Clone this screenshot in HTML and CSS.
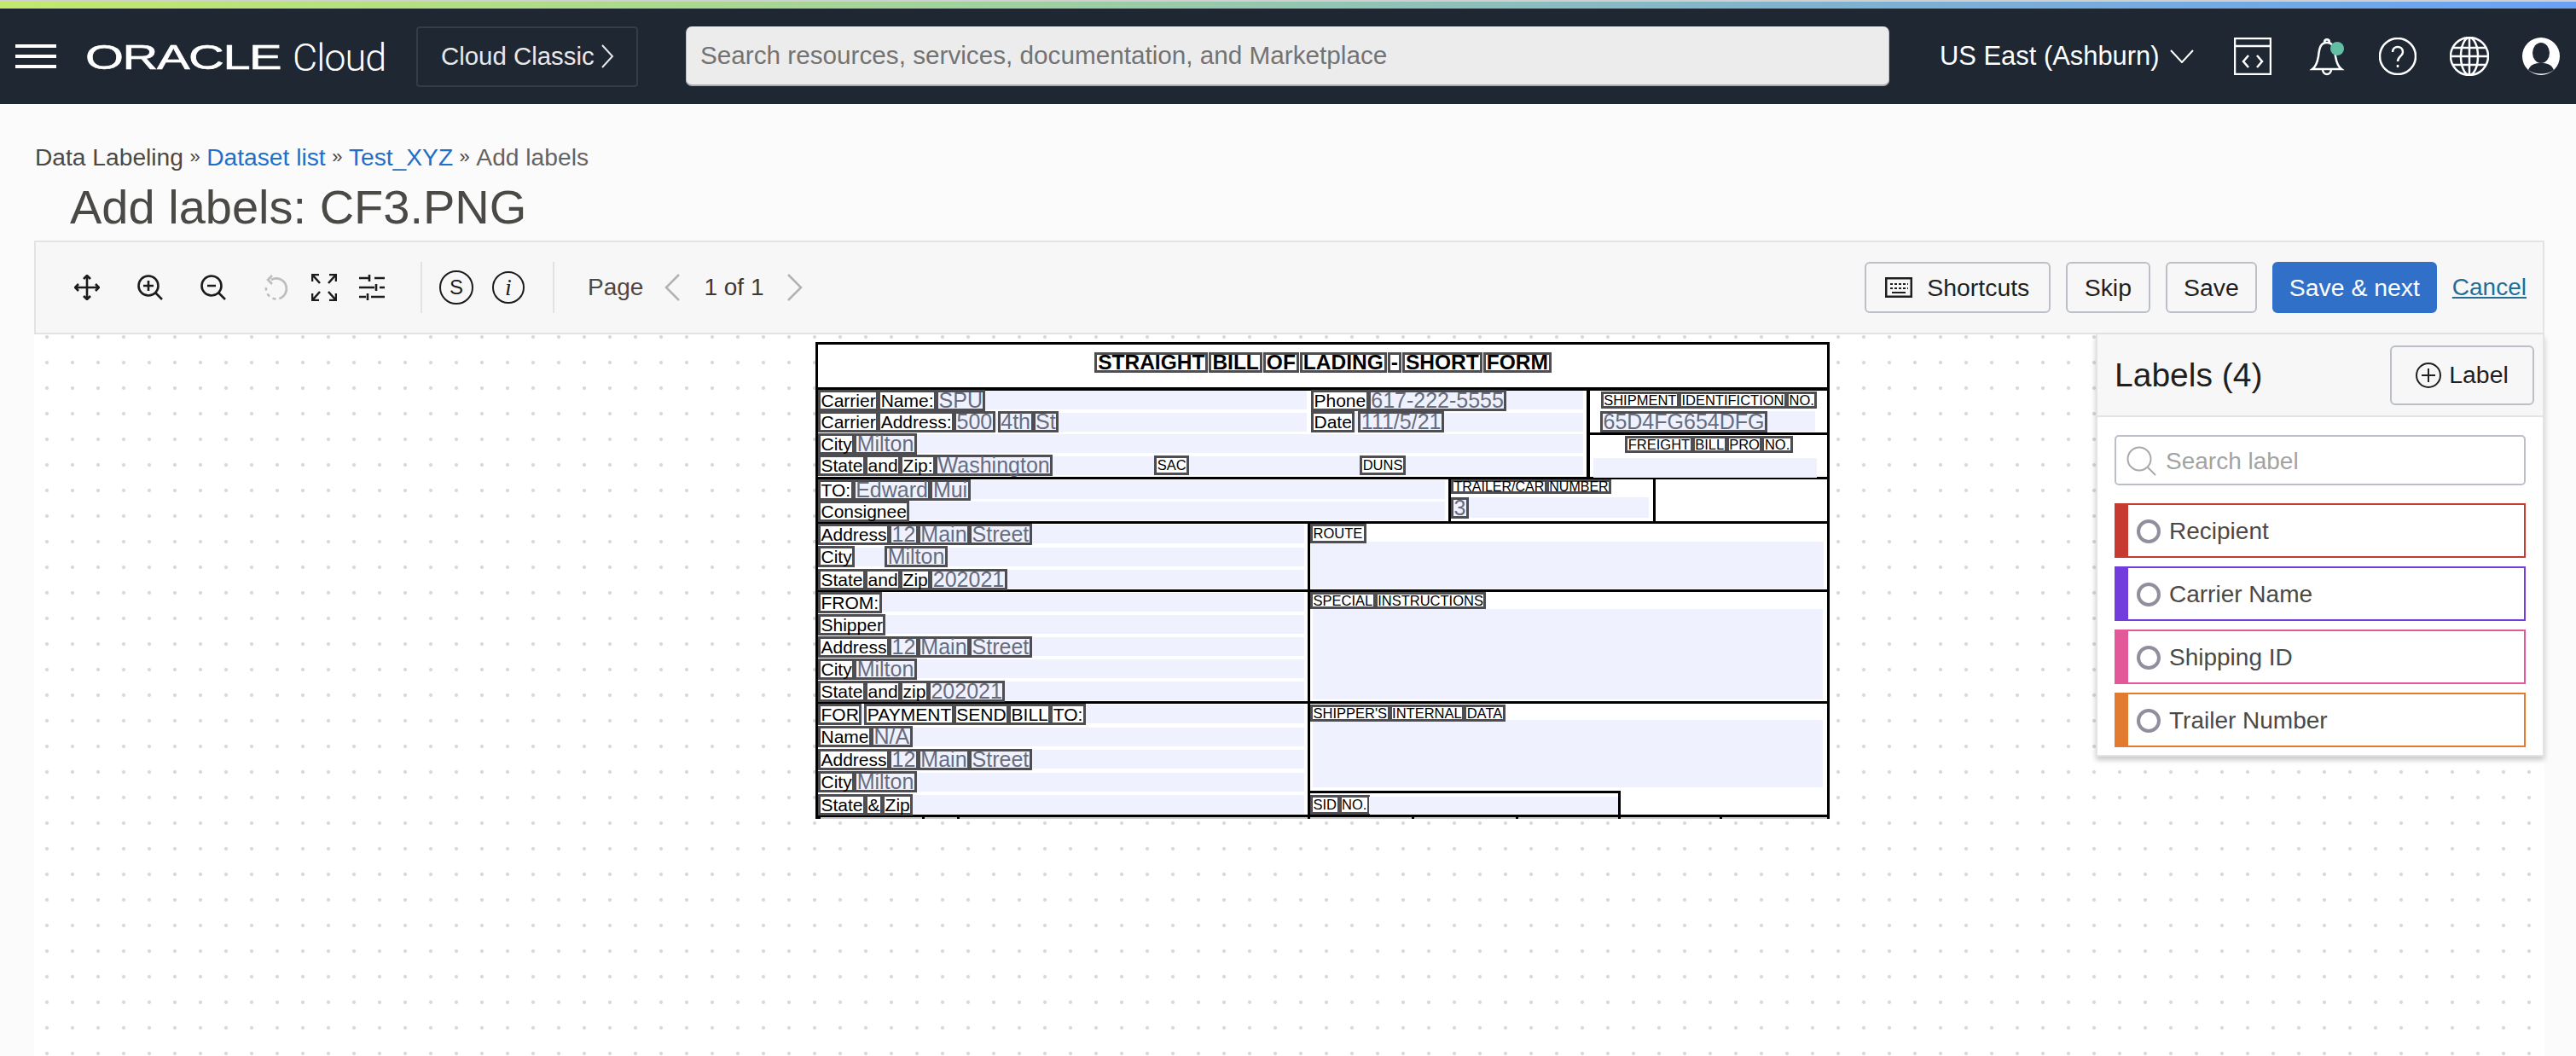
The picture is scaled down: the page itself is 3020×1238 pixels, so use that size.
FILE: index.html
```html
<!DOCTYPE html>
<html lang="en">

<head>
    <meta charset="UTF-8">
    <title>Add labels: CF3.PNG</title>
    <link rel="stylesheet" href="styles.css">
</head>

<body>
    <div class="rainbow"></div>
    <header class="topbar">
        <svg class="burger" viewBox="0 0 48 28"><path d="M0 2h48M0 14h48M0 26h48" /></svg>
        <div class="brand"><span class="brand-oracle">ORACLE</span><span class="brand-cloud">Cloud</span></div>
        <div class="classic">Cloud Classic
            <svg class="classic-arrow" viewBox="0 0 16 30"><path d="M2 2l12 13L2 28" /></svg>
        </div>
        <div class="top-search">Search resources, services, documentation, and Marketplace</div>
        <div class="region">US East (Ashburn)
            <svg class="region-arrow" viewBox="0 0 28 16"><path d="M1 1l13 14L27 1" /></svg>
        </div>
        <svg class="top-icon code" viewBox="0 0 44 44"><path d="M1 1h42v42H1zM1 10h42M17 21l-6 7 6 7M27 21l6 7-6 7" /></svg>
        <svg class="top-icon bell" viewBox="0 0 44 46"><path d="M22 7c-8 0-9 7-10 16-1 6-3 12-7 15h34c-4-3-6-9-7-15-1-9-2-16-10-16zM19 7c0-5 6-5 6 0M17 38c0 8 10 8 10 0" /><ellipse class="bell-dot" cx="34" cy="14" rx="8" ry="8" /></svg>
        <svg class="top-icon help" viewBox="0 0 44 44"><circle cx="22" cy="22" r="21" /><path d="M16 17c0-8 12-8 12 0 0 5-6 5-6 11M22 32v3" /></svg>
        <svg class="top-icon globe" viewBox="0 0 46 46"><circle cx="23" cy="23" r="22" /><ellipse cx="23" cy="23" rx="10" ry="22" /><path d="M23 1v44M3 13h40M1 23h44M3 33h40" /></svg>
        <svg class="top-icon avatar" viewBox="0 0 44 44"><circle class="avatar-bg" cx="22" cy="22" r="22" /><ellipse class="avatar-face" cx="22" cy="18" rx="10" ry="12" /><path class="avatar-face" d="M7 38c3-7 8-8 15-8s12 1 15 8c-8 6-22 6-30 0z" /></svg>
    </header>

    <nav class="crumbs">
        <span>Data Labeling</span><span class="crumb-sep">»</span><a href="#">Dataset list</a><span class="crumb-sep">»</span><a href="#">Test_XYZ</a><span class="crumb-sep">»</span><span class="crumb-last">Add labels</span>
    </nav>
    <h1 class="page-title">Add labels: CF3.PNG</h1>

    <section class="toolbar">
        <div class="tool-group tool-nav">
            <svg class="tool" viewBox="0 0 30 30"><path d="M15 1v28M1 15h28M11 5l4-4 4 4M11 25l4 4 4-4M5 11l-4 4 4 4M25 11l4 4-4 4" /></svg>
            <svg class="tool" viewBox="0 0 30 30"><circle cx="13" cy="13" r="11.5" /><path d="M21 21l8 8M7 13h12M13 7v12" /></svg>
            <svg class="tool" viewBox="0 0 30 30"><circle cx="13" cy="13" r="11.5" /><path d="M21 21l8 8M8 13h10" /></svg>
        </div>
        <div class="tool-group tool-view">
            <svg class="tool muted" viewBox="0 0 30 30"><path class="dashed" d="M9 6a12 12 0 1 1-6 9" /><path d="M10 1L5 6l5 5" /></svg>
            <svg class="tool tool-expand" viewBox="0 0 30 32"><path d="M10 11L2 2M1 9V1h8M20 11l8-9M21 1h8v8M10 21l-8 9M1 23v8h8M20 21l8 9M21 31h8v-8" /></svg>
            <svg class="tool" viewBox="0 0 30 30"><path d="M0 4h12M18 4h12M12 0v8M0 15h18M24 15h6M20 11v8M0 26h8M14 26h16M10 22v8" /></svg>
        </div>
        <div class="tool-sep sep-first"></div>
        <div class="badge badge-s">S</div>
        <div class="badge badge-i">i</div>
        <div class="tool-sep sep-second"></div>
        <span class="pager-label">Page</span>
        <svg class="pager-arrow" viewBox="0 0 20 32"><path d="M18 1L3 16l15 15" /></svg>
        <span class="pager-count">1 of 1</span>
        <svg class="pager-arrow" viewBox="0 0 20 32"><path d="M2 1l15 15L2 31" /></svg>

        <div class="tool-actions">
            <button class="btn btn-shortcuts">
                <svg class="keyboard" viewBox="0 0 32 24"><path d="M1 1h30v22H1z" /><path class="keys" d="M6 8h3M11 8h3M16 8h3M21 8h3M26 8h1M6 13h3M11 13h3M16 13h3M21 13h3M26 13h1M8 18h16" /></svg>
                Shortcuts
            </button>
            <button class="btn btn-skip">Skip</button>
            <button class="btn btn-save">Save</button>
            <button class="btn btn-primary">Save &amp; next</button>
            <a class="cancel" href="#">Cancel</a>
        </div>
    </section>

    <main class="canvas">
        <div class="doc">
            <div class="doc-title">
                <span class="w t">STRAIGHT</span><span class="w t">BILL</span><span class="w t">OF</span><span class="w t">LADING</span><span class="w t">-</span><span class="w t">SHORT</span><span class="w t">FORM</span>
            </div>

            <div class="doc-row row-carrier">
                <div class="cell stack carrier-left">
                    <div class="line split">
                        <div class="part part-a"><span class="w">Carrier</span><span class="w">Name:</span><span class="w v">SPU</span></div>
                        <div class="part part-b"><span class="w">Phone</span><span class="w v">617-222-5555</span></div>
                    </div>
                    <div class="line split">
                        <div class="part part-a"><span class="w">Carrier</span><span class="w">Address:</span><span class="w v">500</span><span class="w v push-4">4th</span><span class="w v">St</span></div>
                        <div class="part part-b"><span class="w">Date</span><span class="w v push-5">111/5/21</span></div>
                    </div>
                    <div class="line"><span class="w">City</span><span class="w v">Milton</span></div>
                    <div class="line state-line">
                        <span class="w">State</span><span class="w">and</span><span class="w">Zip:</span><span class="w v">Washington</span>
                        <span class="w s sac">SAC</span><span class="w s duns">DUNS</span>
                    </div>
                </div>
                <div class="cell carrier-right">
                    <div class="shipment">
                        <div class="heads"><span class="w s">SHIPMENT</span><span class="w s">IDENTIFICTION</span><span class="w s">NO.</span></div>
                        <div class="line ship-value"><span class="w v">65D4FG654DFG</span></div>
                    </div>
                    <div class="freight">
                        <div class="heads"><span class="w s">FREIGHT</span><span class="w s">BILL</span><span class="w s">PRO</span><span class="w s">NO.</span></div>
                        <div class="line freight-value"></div>
                    </div>
                </div>
            </div>

            <div class="doc-row row-to">
                <div class="cell stack to-left">
                    <div class="line"><span class="w">TO:</span><span class="w v">Edward</span><span class="w v">Mui</span></div>
                    <div class="line"><span class="w">Consignee</span></div>
                </div>
                <div class="cell trailer">
                    <div class="heads heads-left"><span class="w s">TRAILER/CAR</span><span class="w s">NUMBER</span></div>
                    <div class="line trailer-value"><span class="w v">3</span></div>
                </div>
                <div class="cell trailer-blank"></div>
            </div>

            <div class="doc-row row-route">
                <div class="cell stack left-col">
                    <div class="line"><span class="w">Address</span><span class="w v">12</span><span class="w v">Main</span><span class="w v">Street</span></div>
                    <div class="line"><span class="w">City</span><span class="w v push-36">Milton</span></div>
                    <div class="line"><span class="w">State</span><span class="w">and</span><span class="w">Zip</span><span class="w v">202021</span></div>
                </div>
                <div class="cell right-col">
                    <span class="w s route-word">ROUTE</span>
                    <div class="pale pale-route"></div>
                </div>
            </div>

            <div class="doc-row row-from">
                <div class="cell stack left-col">
                    <div class="line"><span class="w">FROM:</span></div>
                    <div class="line"><span class="w">Shipper</span></div>
                    <div class="line"><span class="w">Address</span><span class="w v">12</span><span class="w v">Main</span><span class="w v">Street</span></div>
                    <div class="line"><span class="w">City</span><span class="w v">Milton</span></div>
                    <div class="line"><span class="w">State</span><span class="w">and</span><span class="w">zip</span><span class="w v">202021</span></div>
                </div>
                <div class="cell right-col">
                    <div class="heads heads-left"><span class="w s">SPECIAL</span><span class="w s">INSTRUCTIONS</span></div>
                    <div class="pale pale-special"></div>
                </div>
            </div>

            <div class="doc-row row-pay">
                <div class="cell stack left-col">
                    <div class="line"><span class="w">FOR</span><span class="w push-4">PAYMENT</span><span class="w">SEND</span><span class="w">BILL</span><span class="w">TO:</span></div>
                    <div class="line"><span class="w">Name</span><span class="w v">N/A</span></div>
                    <div class="line"><span class="w">Address</span><span class="w v">12</span><span class="w v">Main</span><span class="w v">Street</span></div>
                    <div class="line"><span class="w">City</span><span class="w v">Milton</span></div>
                    <div class="line"><span class="w">State</span><span class="w">&amp;</span><span class="w">Zip</span></div>
                </div>
                <div class="cell right-col internal">
                    <div class="heads heads-left"><span class="w s">SHIPPER'S</span><span class="w s">INTERNAL</span><span class="w s">DATA</span></div>
                    <div class="pale pale-internal"></div>
                    <div class="sid"><span class="w s sid-word">SID</span><span class="w s sid-word">NO.</span><div class="pale pale-sid"></div></div>
                </div>
            </div>

            <div class="doc-tail">
                <i></i><i></i><i></i><i></i><i></i><i></i><i></i><i></i>
            </div>
        </div>

        <aside class="labels">
            <div class="labels-head">
                <h2 class="labels-title">Labels (4)</h2>
                <button class="btn btn-label">
                    <svg class="plus" viewBox="0 0 30 30"><circle cx="15" cy="15" r="14" /><path d="M15 7v16M7 15h16" /></svg>
                    Label
                </button>
            </div>
            <div class="labels-body">
                <div class="label-search">
                    <svg class="label-search-icon" viewBox="0 0 36 36"><circle cx="15" cy="15" r="13.5" /><path d="M25 25l9 9" /></svg>
                    Search label
                </div>
                <div class="label-row red"><span class="radio"></span>Recipient</div>
                <div class="label-row violet"><span class="radio"></span>Carrier Name</div>
                <div class="label-row pink"><span class="radio"></span>Shipping ID</div>
                <div class="label-row orange"><span class="radio"></span>Trailer Number</div>
            </div>
        </aside>
    </main>
</body>

</html>
```

FILE: styles.css
```css
* {
    box-sizing: border-box;
}

body {
    margin: 0;
    height: 1238px;
    overflow: hidden;
    background-color: #fbfbfb;
    font-family: "Liberation Sans", Arial, sans-serif;
    color: #4b4946;
}

svg {
    fill: none;
    stroke: currentColor;
    flex-shrink: 0;
}

/* top of the page */
.rainbow {
    height: 10px;
    border-top: 2px solid #cfcfcf;
    background: linear-gradient(90deg, #c2e96c 0%, #9ed0a0 40%, #7fb3cf 70%, #69a2f5 100%);
}

.topbar {
    height: 112px;
    display: flex;
    align-items: center;
    background-color: #1f2733;
    color: #fff;
    padding-left: 18px;
}

.burger {
    width: 48px;
    height: 28px;
    stroke-width: 4;
}

.brand {
    display: flex;
    align-items: center;
    margin-left: 34px;
    padding-top: 2px;
    width: 353px;
}

.brand-oracle {
    display: inline-block;
    width: 243px;
    font-size: 41px;
    letter-spacing: -1px;
    -webkit-text-stroke: 0.6px #fff;
    transform: scaleX(1.41);
    transform-origin: left center;
}

.brand-cloud {
    font-family: Roboto, sans-serif;
    font-weight: 300;
    font-size: 45px;
    letter-spacing: -1px;
}

.classic {
    width: 260px;
    height: 71px;
    margin-left: 35px;
    padding-left: 27px;
    display: flex;
    align-items: center;
    border: 2px solid #323c4b;
    border-radius: 4px;
    font-size: 29.4px;
    color: #e8e8e8;
}

.classic-arrow {
    width: 16px;
    height: 30px;
    margin-left: 7px;
    stroke-width: 2;
}

.top-search {
    width: 1411px;
    height: 70px;
    margin-left: 56px;
    padding-left: 16px;
    display: flex;
    align-items: center;
    background-color: #ececec;
    border-bottom: 2px solid #a9adb3;
    border-left: 1px solid #b9bcc1;
    border-right: 1px solid #b9bcc1;
    border-radius: 7px;
    font-size: 29.7px;
    color: #737373;
}

.region {
    display: flex;
    align-items: center;
    margin-left: 59px;
    font-size: 30.9px;
    white-space: nowrap;
}

.region-arrow {
    width: 28px;
    height: 16px;
    margin-left: 12px;
    stroke-width: 2;
}

.top-icon {
    stroke-width: 2.5;
    height: 44px;
    width: 44px;
}

.code {
    margin-left: 47px;
}

.bell {
    margin-left: 43px;
    height: 46px;
}

.bell-dot {
    fill: #63bfa3;
    stroke: none;
}

.help {
    margin-left: 39px;
}

.globe {
    margin-left: 39px;
    width: 46px;
    height: 46px;
}

.avatar {
    margin-left: 39px;
    stroke: none;
}

.avatar-bg {
    fill: #fff;
}

.avatar-face {
    fill: #1f2733;
}

/* breadcrumb and heading */
.crumbs {
    height: 32px;
    margin-top: 46px;
    padding-left: 41px;
    display: flex;
    align-items: center;
    font-size: 28.2px;
}

.crumbs a {
    color: #1f6fca;
    text-decoration: none;
}

.crumb-sep {
    margin: 0 7.5px;
    font-size: 22px;
}

.crumb-last {
    color: #66635f;
}

.page-title {
    margin: 13px 0 0;
    height: 60px;
    padding-left: 82px;
    font-size: 56px;
    line-height: 60px;
    font-weight: normal;
}

/* toolbar */
.toolbar {
    margin: 9px 37px 0 40px;
    height: 110px;
    display: flex;
    align-items: center;
    padding-left: 45px;
    background-color: #f7f7f7;
    border: 2px solid #e3e3e5;
    color: #1c1c1c;
}

.tool-group {
    display: flex;
    align-items: center;
}

.tool {
    width: 30px;
    height: 30px;
    stroke-width: 2.6;
}

.tool-expand {
    height: 32px;
}

.tool-nav {
    gap: 44px;
}

.tool-view {
    gap: 26px;
    margin-left: 44px;
}

.muted {
    color: #bdbdbd;
}

.dashed {
    stroke-dasharray: 40 4 4 4 4 4;
}

.tool-sep {
    width: 2px;
    height: 60px;
    background-color: #e2e2e2;
}

.sep-first {
    margin-left: 42px;
}

.sep-second {
    margin-left: 33px;
}

.badge {
    display: flex;
    align-items: center;
    justify-content: center;
    border: 2px solid #1c1c1c;
    border-radius: 50%;
    font-size: 24px;
}

.badge-s {
    width: 40px;
    height: 40px;
    margin-left: 20px;
}

.badge-i {
    width: 38px;
    height: 38px;
    margin-left: 22px;
    font-family: "Liberation Serif", serif;
    font-style: italic;
    font-size: 28px;
}

.pager-label {
    margin-left: 39px;
    font-size: 28px;
    color: #4b4946;
}

.pager-arrow {
    width: 20px;
    height: 32px;
    margin-left: 24px;
    stroke-width: 2.5;
    color: #b2b2b2;
}

.pager-count {
    margin-left: 27px;
    font-size: 28px;
    color: #3a3a3a;
}

.pager-count + .pager-arrow {
    margin-left: 27px;
}

.tool-actions {
    margin-left: auto;
    display: flex;
    align-items: center;
    gap: 18px;
    padding-right: 19px;
}

.btn {
    height: 60px;
    padding: 0;
    display: inline-flex;
    align-items: center;
    justify-content: center;
    background-color: #f7f7f7;
    border: 2px solid #bbbfc6;
    border-radius: 6px;
    font-family: inherit;
    font-size: 28.4px;
    color: #1f1f1f;
}

.btn-shortcuts {
    width: 218px;
    gap: 17px;
}

.btn-skip {
    width: 99px;
}

.btn-save {
    width: 107px;
}

.keyboard {
    width: 32px;
    height: 24px;
    stroke-width: 3;
}

.keys {
    stroke-width: 2;
}

.btn-primary {
    width: 193px;
    background-color: #3170c9;
    border-color: #3170c9;
    color: #fff;
}

.cancel {
    font-size: 28px;
    color: #266d95;
}

/* dotted canvas */
.canvas {
    position: relative;
    margin: 0 37px 0 40px;
    height: 846px;
    padding: 9px 0 0 916px;
    background-color: #fff;
    background-image: radial-gradient(#d9d9d9 2px, transparent 2.2px);
    background-size: 30px 30px;
    background-position: 0 -12px;
}

/* the scanned form */
.doc {
    width: 1189px;
    height: 559px;
    overflow: hidden;
    background-color: #fff;
    border: 3px solid #000;
    border-bottom: 0;
    color: #000;
}

.doc-title {
    height: 54px;
    display: flex;
    align-items: flex-start;
    justify-content: center;
    padding: 9px 0 0 2px;
    border-bottom: 4px solid #000;
}

.doc-row {
    display: flex;
    border-bottom: 3px solid #000;
}

.cell {
    flex-shrink: 0;
}

.stack {
    display: flex;
    flex-direction: column;
    justify-content: space-between;
}

.w {
    flex-shrink: 0;
    height: 25px;
    margin-right: -1px;
    padding: 0 0.5px;
    background-color: #fff;
    border: 3px solid #4d4d52;
    font-size: 21px;
    line-height: 19px;
    white-space: nowrap;
}

.v {
    background-color: #eff2fe;
    font-size: 25px;
    color: #676c7d;
}

.t {
    height: 24px;
    padding: 0 1px;
    border-width: 3.5px;
    font-size: 24.5px;
    font-weight: bold;
    line-height: 17px;
    margin-right: 1px;
}

.s {
    height: 20px;
    font-size: 16.5px;
    line-height: 14px;
}

.push-4 {
    margin-left: 4px;
}

.push-5 {
    margin-left: 5px;
}

.push-36 {
    margin-left: 36px;
}

.line,
.pale {
    background-color: #eff2fe;
}

.line {
    height: 22px;
    display: flex;
    align-items: center;
}

.split {
    background-color: transparent;
}

.part {
    height: 100%;
    display: flex;
    align-items: center;
    background-color: #eff2fe;
}

.part-a {
    width: 573px;
}

.part-b {
    width: 319px;
    margin-left: 5px;
}

.row-carrier {
    height: 104px;
}

.carrier-left {
    width: 901px;
    height: 101px;
    padding: 0 4px 2px 0;
    border-right: 0;
}

.sac {
    margin-left: 120px;
    height: 23px;
    line-height: 17px;
}

.duns {
    margin-left: 201px;
    height: 23px;
    line-height: 17px;
}

.carrier-right {
    flex: 1;
    border-left: 4px solid #000;
}

.shipment {
    height: 52px;
    border-bottom: 3px solid #000;
    padding-top: 1px;
}

.freight {
    padding-top: 1px;
}

.heads {
    display: flex;
    justify-content: center;
}

.heads-left {
    justify-content: flex-start;
}

.ship-value {
    height: 24px;
    margin: 3px 14px 0 12px;
}

.freight-value {
    height: 23px;
    margin: 6px 12px 0 4px;
}

.row-to {
    height: 52px;
}

.to-left {
    width: 739px;
    height: 49px;
    padding: 1px 4px 1px 0;
}

.trailer {
    width: 243px;
    border-left: 3px solid #000;
    border-right: 3px solid #000;
}

.trailer .s {
    height: 17px;
    line-height: 11px;
    font-size: 16px;
}

.trailer-value {
    width: 232px;
    height: 24px;
    margin-top: 4px;
}

.left-col {
    width: 574px;
    padding: 1px 4px 1px 0;
}

.right-col {
    flex: 1;
    border-left: 3px solid #000;
}

.row-route {
    height: 80px;
}

.route-word {
    position: relative;
    display: block;
    width: 66px;
    height: 23px;
    line-height: 17px;
}

.pale-route {
    height: 55px;
    margin: -2px 4px 0 1px;
}

.row-from {
    height: 131px;
}

.pale-special {
    height: 106px;
    margin: 0 5px 0 3px;
}

.row-pay {
    height: 133px;
    border-bottom: 3px solid #000;
}

.internal .heads {
    padding-top: 1px;
}

.pale-internal {
    height: 79px;
    margin: -2px 5px 0 3px;
}

.sid {
    width: 364px;
    height: 30px;
    margin-top: 4px;
    display: flex;
    align-items: center;
    border-top: 3px solid #000;
    border-right: 3px solid #000;
}

.sid-word {
    height: 23px;
    line-height: 17px;
}

.pale-sid {
    width: 297px;
    height: 20px;
}

.doc-tail {
    height: 4px;
    display: grid;
    grid-template-columns: 122px 41px 411px 122px 122px 120px 119px 1fr;
}

.doc-tail i {
    background-color: #c9c9c9;
    border-left: 3px solid #000;
}

/* labels panel on top of the canvas */
.labels {
    position: absolute;
    top: 0;
    right: 0;
    width: 526px;
    height: 495px;
    background-color: #fff;
    border: 2px solid #e3e3e5;
    border-top: 0;
    box-shadow: 0 4px 6px rgba(0, 0, 0, 0.22);
    color: #1f1f1f;
}

.labels-head {
    height: 97px;
    display: flex;
    align-items: center;
    justify-content: space-between;
    padding: 0 10px 0 20px;
    background-color: #f7f7f7;
    border-bottom: 2px solid #e3e3e5;
}

.labels-title {
    margin: 0;
    font-size: 39px;
    font-weight: normal;
}

.btn-label {
    width: 169px;
    height: 70px;
    gap: 9px;
}

.plus {
    width: 30px;
    height: 30px;
    stroke-width: 2;
}

.labels-body {
    padding: 21px 20px 0;
}

.label-search {
    height: 59px;
    margin-bottom: 21px;
    padding: 2px 0 0 12px;
    display: flex;
    align-items: center;
    gap: 10px;
    border: 2px solid #bbbfc6;
    border-radius: 5px;
    font-size: 28px;
    color: #a3a3a3;
}

.label-search-icon {
    width: 36px;
    height: 36px;
    stroke-width: 2;
    color: #a9a9a9;
}

.label-row {
    height: 64px;
    margin-bottom: 10px;
    padding: 2px 0 0 10px;
    display: flex;
    align-items: center;
    border: 2px solid;
    border-left-width: 16px;
    font-size: 28px;
    color: #4b4946;
}

.radio {
    width: 28px;
    height: 28px;
    margin-right: 10px;
    border: 4px solid #8f8f9d;
    border-radius: 50%;
}

.red {
    border-color: #c73a31;
}

.violet {
    border-color: #733ddd;
}

.pink {
    border-color: #e25898;
}

.orange {
    border-color: #e27a2f;
}
```
